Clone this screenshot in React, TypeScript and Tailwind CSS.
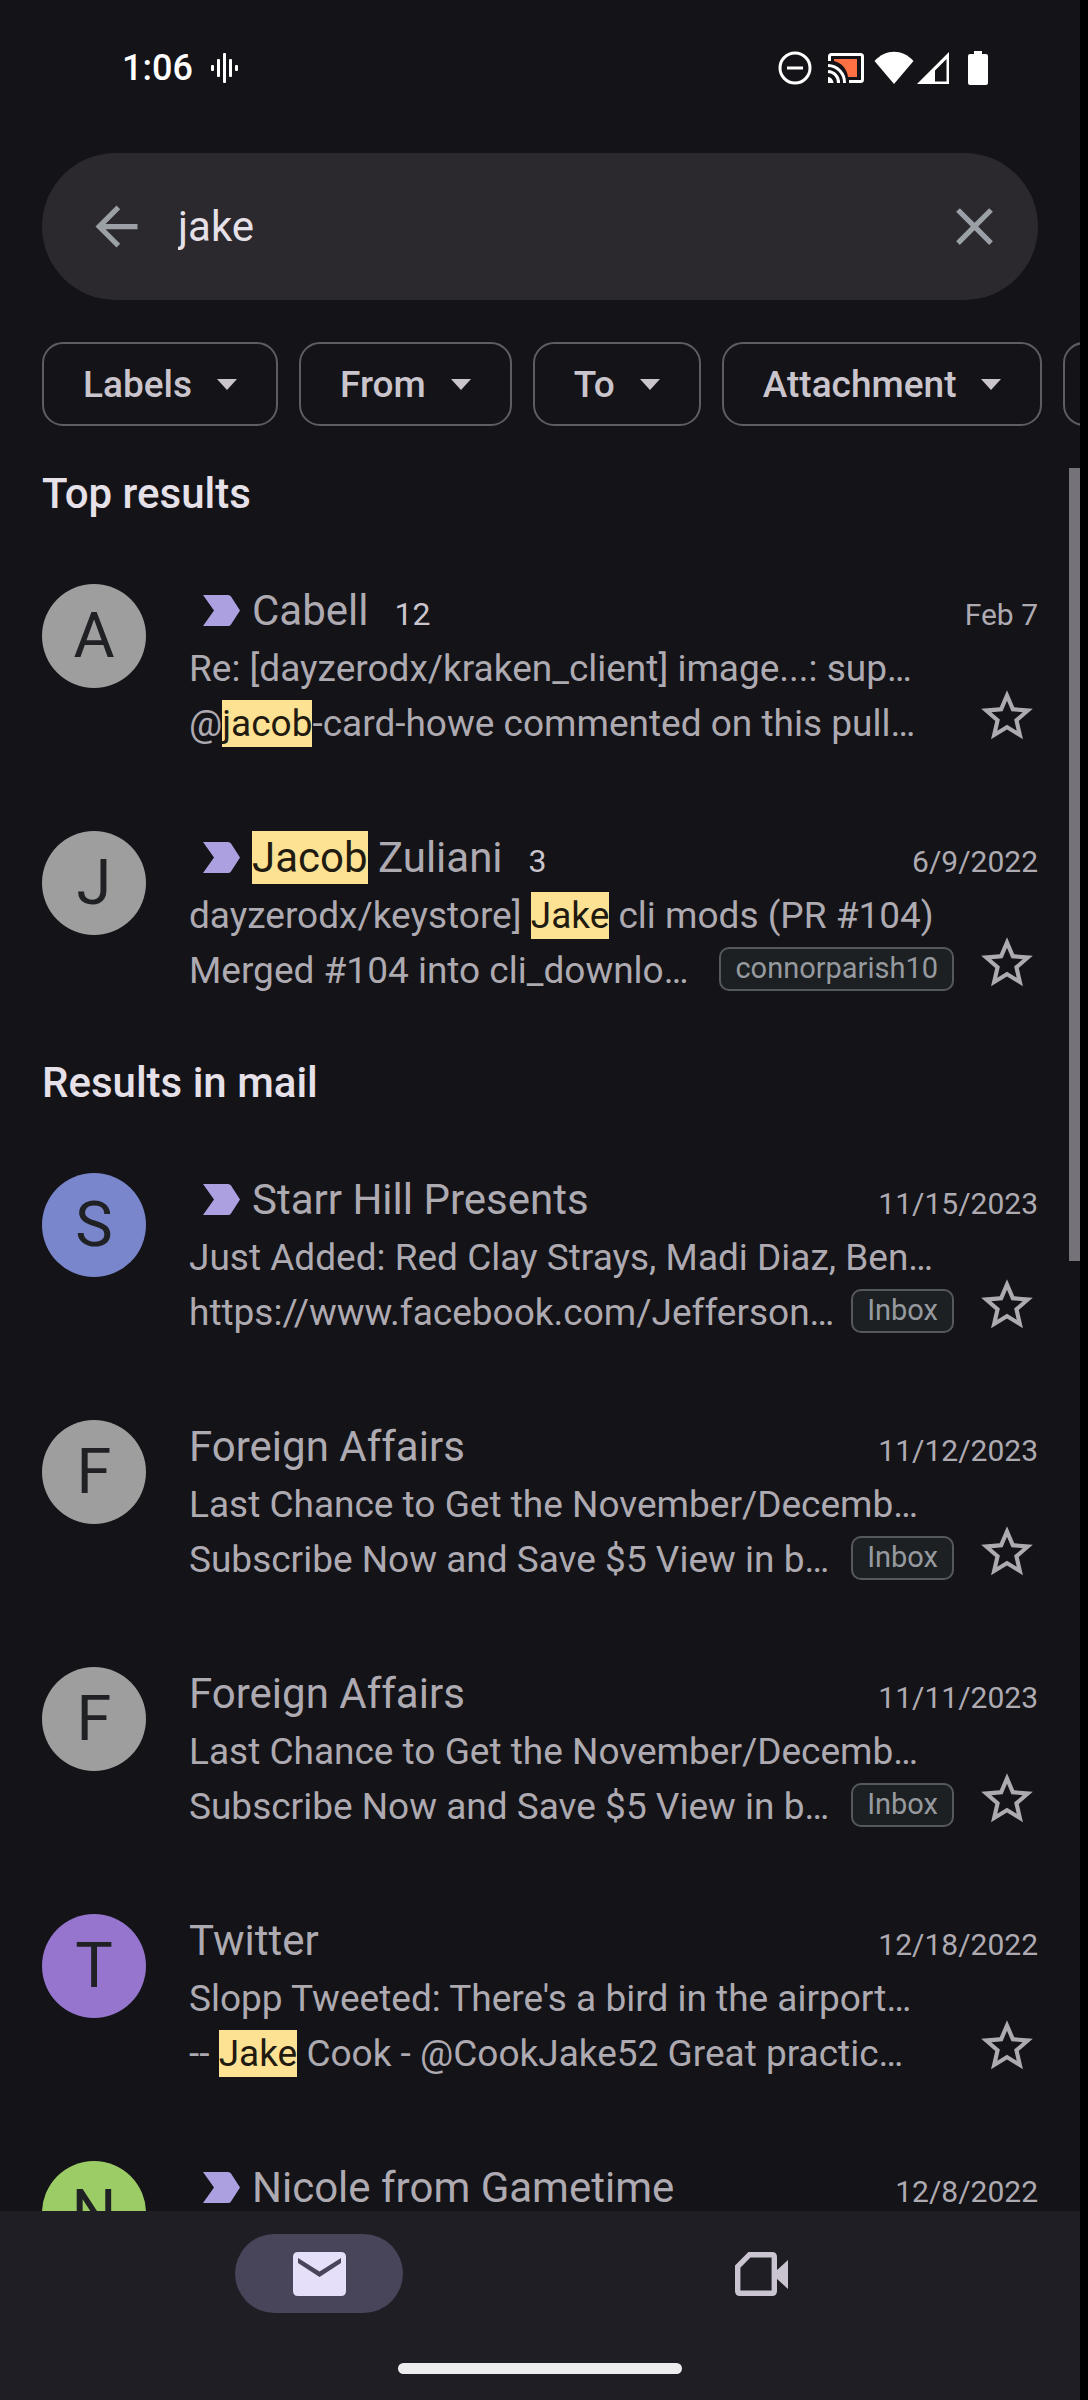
import { useState } from "react";
import type { ReactNode } from "react";

type Mail = {
  initial: string;
  avatar: string;
  important?: boolean;
  sender: ReactNode;
  count?: number;
  date: string;
  subject?: ReactNode;
  snippet?: ReactNode;
  label?: string;
};

function Hit({ children }: { children: ReactNode }) {
  return <mark className="inline-block bg-[#fde293] text-[#1f1b10]">{children}</mark>;
}

const topResults: Mail[] = [
  {
    initial: "A",
    avatar: "bg-[#9e9e9e]",
    important: true,
    sender: "Cabell",
    count: 12,
    date: "Feb 7",
    subject: "Re: [dayzerodx/kraken_client] image...: sup…",
    snippet: <>@<Hit>jacob</Hit>-card-howe commented on this pull…</>,
  },
  {
    initial: "J",
    avatar: "bg-[#9e9e9e]",
    important: true,
    sender: <><Hit>Jacob</Hit> Zuliani</>,
    count: 3,
    date: "6/9/2022",
    subject: <>dayzerodx/keystore] <Hit>Jake</Hit> cli mods (PR #104)</>,
    snippet: "Merged #104 into cli_downlo…",
    label: "connorparish10",
  },
];

const mailResults: Mail[] = [
  {
    initial: "S",
    avatar: "bg-[#7986cb]",
    important: true,
    sender: "Starr Hill Presents",
    date: "11/15/2023",
    subject: "Just Added: Red Clay Strays, Madi Diaz, Ben…",
    snippet: "https://www.facebook.com/Jefferson…",
    label: "Inbox",
  },
  {
    initial: "F",
    avatar: "bg-[#9e9e9e]",
    sender: "Foreign Affairs",
    date: "11/12/2023",
    subject: "Last Chance to Get the November/Decemb…",
    snippet: "Subscribe Now and Save $5 View in b…",
    label: "Inbox",
  },
  {
    initial: "F",
    avatar: "bg-[#9e9e9e]",
    sender: "Foreign Affairs",
    date: "11/11/2023",
    subject: "Last Chance to Get the November/Decemb…",
    snippet: "Subscribe Now and Save $5 View in b…",
    label: "Inbox",
  },
  {
    initial: "T",
    avatar: "bg-[#9575cd]",
    sender: "Twitter",
    date: "12/18/2022",
    subject: "Slopp Tweeted: There's a bird in the airport…",
    snippet: <>-- <Hit>Jake</Hit> Cook - @CookJake52 Great practic…</>,
  },
  {
    initial: "N",
    avatar: "bg-[#9ccc65]",
    important: true,
    sender: "Nicole from Gametime",
    date: "12/8/2022",
  },
];

function StatusBar() {
  return (
    <div className="flex h-[135px] shrink-0 items-center justify-between pr-[92px] pl-[122px] text-white">
      <div className="flex items-center gap-[18px]">
        <span className="text-[36px] leading-[42px] font-medium">1:06</span>
        <svg viewBox="0 0 28 32" className="h-8 w-7" fill="currentColor" aria-hidden="true">
          <rect x="0" y="13" width="3" height="6" rx="1" />
          <rect x="6" y="7" width="3" height="18" rx="1" />
          <rect x="12" y="1" width="3" height="30" rx="1" />
          <rect x="18" y="7" width="3" height="18" rx="1" />
          <rect x="24" y="13" width="3" height="6" rx="1" />
        </svg>
      </div>
      <div className="flex items-center">
        <svg viewBox="0 0 34 34" className="h-[34px] w-[34px]" fill="none" stroke="currentColor" strokeWidth="3" aria-hidden="true">
          <circle cx="17" cy="17" r="15" />
          <path d="M9 17h16" />
        </svg>
        <svg viewBox="0 0 38 32" className="ml-[15px] h-8 w-[38px]" aria-hidden="true">
          <path d="M7 7H30V25H21C20 17 15 11 7 9Z" fill="#ff7043" />
          <g fill="none" stroke="currentColor" strokeWidth="3">
            <path d="M2.5 9V4.500Q2.500 2.500 4.500 2.500H33.500Q35.500 2.500 35.500 4.500V27.500Q35.500 29.500 33.500 29.500H22" />
            <path d="M1 13.500A17 17 0 0 1 17.500 31" />
            <path d="M1 19.500A11 11 0 0 1 11.500 31" />
          </g>
          <path d="M1 25A6 6 0 0 1 6.500 31H1Z" fill="currentColor" />
        </svg>
        <svg viewBox="0 0 40 34" className="ml-[9px] h-[34px] w-10" fill="currentColor" aria-hidden="true">
          <path d="M0.500 10C12 -2.300 28 -2.300 39.500 10L20 33Z" />
        </svg>
        <svg viewBox="0 0 34 34" className="ml-[2px] h-[34px] w-[34px]" fill="currentColor" aria-hidden="true">
          <path fillRule="evenodd" d="M33 1V33H1ZM30.500 8L19 19.500V30.500H30.500Z" />
        </svg>
        <svg viewBox="0 0 20 34" className="ml-[18px] h-[34px] w-5" fill="currentColor" aria-hidden="true">
          <path d="M6 0h8v3h4a2 2 0 0 1 2 2v27a2 2 0 0 1-2 2H2a2 2 0 0 1-2-2V5a2 2 0 0 1 2-2h4z" />
        </svg>
      </div>
    </div>
  );
}

function SearchBar() {
  const [query, setQuery] = useState("jake");
  return (
    <form
      role="search"
      onSubmit={(e) => e.preventDefault()}
      className="mx-[42px] mt-[18px] flex h-[147px] shrink-0 items-center rounded-full bg-[#2b282e] pr-8 pl-[43px] text-[#9aa0a6]"
    >
      <button type="button" aria-label="Back" className="shrink-0">
        <svg viewBox="0 0 24 24" className="h-[63px] w-[63px]" fill="currentColor">
          <path d="M20 11H7.830l5.590-5.590L12 4l-8 8 8 8 1.410-1.410L7.830 13H20v-2z" />
        </svg>
      </button>
      <input
        type="text"
        aria-label="Search in mail"
        value={query}
        onChange={(e) => setQuery(e.target.value)}
        className="ml-[30px] min-w-0 flex-1 bg-transparent text-[42px] leading-[53px] text-[#e6e1e9] outline-none"
      />
      <button type="button" aria-label="Clear" onClick={() => setQuery("")} className="shrink-0">
        <svg viewBox="0 0 24 24" className="h-[63px] w-[63px]" fill="currentColor">
          <path d="M19 6.410L17.590 5 12 10.590 6.410 5 5 6.410 10.590 12 5 17.590 6.410 19 12 13.410 17.590 19 19 17.590 13.410 12z" />
        </svg>
      </button>
    </form>
  );
}

function Filters() {
  return (
    <div className="mt-[42px] flex shrink-0 gap-[21px] overflow-hidden pl-[42px]">
      {["Labels", "From", "To", "Attachment"].map((name) => (
        <button
          key={name}
          type="button"
          className="flex h-[84px] shrink-0 items-center gap-[25px] rounded-[21px] border-2 border-[#5f5d64] px-[39px] text-[37px] leading-[47px] font-medium text-[#cac5cd]"
        >
          {name}
          <svg viewBox="0 0 20 11" className="h-[11px] w-5" fill="currentColor" aria-hidden="true">
            <path d="M0 0H20L10 11Z" />
          </svg>
        </button>
      ))}
      <button type="button" aria-label="More filters" className="h-[84px] w-[200px] shrink-0 rounded-[21px] border-2 border-[#5f5d64]" />
    </div>
  );
}

function Row({ mail }: { mail: Mail }) {
  return (
    <li className="flex gap-[43px] pt-10 pb-11 text-[#aeaab1]">
      <div className={`flex h-[104px] w-[104px] shrink-0 items-center justify-center rounded-full text-[63px] leading-[74px] text-[#202124] ${mail.avatar}`}>
        {mail.initial}
      </div>
      <div className="min-w-0 flex-1">
        <div className="flex items-baseline">
          {mail.important && (
            <svg viewBox="0 0 37 31" className="mr-3 ml-[14px] h-[31px] w-[37px] shrink-0 self-center" fill="#aca0e0" role="img" aria-label="Important">
              <path d="M0 0H25Q27 0 28 1.500L37 15.500L28 29.500Q27 31 25 31H0L11 15.500Z" />
            </svg>
          )}
          <h3 className="truncate text-[42px] leading-[53px]">{mail.sender}</h3>
          {mail.count && <span className="ml-[26px] text-[32px] leading-9 text-[#cac5cd]">{mail.count}</span>}
          <time className="ml-auto shrink-0 text-[30px] leading-9">{mail.date}</time>
        </div>
        {mail.subject && (
          <div className="mt-2 flex items-end justify-between gap-[22px]">
            <div className="min-w-0 flex-1 text-[37px] leading-[47px]">
              <p className="truncate">{mail.subject}</p>
              <div className="mt-2 flex items-start justify-between gap-2">
                <p className="min-w-0 truncate">{mail.snippet}</p>
                {mail.label && (
                  <span className="h-11 shrink-0 rounded-[10px] border-2 border-[#55585c] bg-[#1d2023] px-[14px] text-[29px] leading-[38px] text-[#969a9f]">
                    {mail.label}
                  </span>
                )}
              </div>
            </div>
            <button type="button" aria-label="Star" className="shrink-0">
              <svg viewBox="0 0 24 24" className="h-[62px] w-[62px]" fill="currentColor">
                <path d="M22 9.240l-7.190-.620L12 2 9.190 8.630 2 9.240l5.460 4.730L5.820 21 12 17.270 18.180 21l-1.630-7.030L22 9.240zM12 15.400l-3.760 2.270 1-4.280-3.320-2.880 4.380-.380L12 6.100l1.710 4.040 4.380.380-3.320 2.880 1 4.280L12 15.400z" />
              </svg>
            </button>
          </div>
        )}
      </div>
    </li>
  );
}

function Section({ title, mails }: { title: string; mails: Mail[] }) {
  return (
    <section>
      <h2 className="pb-[6px] text-[42px] leading-[89px] font-medium text-[#e6e1e9]">{title}</h2>
      <ul>
        {mails.map((mail) => (
          <Row key={mail.date} mail={mail} />
        ))}
      </ul>
    </section>
  );
}

function BottomNav() {
  return (
    <div className="shrink-0 bg-[#1f1e24] pt-[23px] pb-[26px]">
      <nav className="flex justify-around px-[98px]">
        <button type="button" aria-label="Mail" aria-current="page" className="flex h-[79px] w-[168px] items-center justify-center rounded-full bg-[#484459] text-[#e5dff9]">
          <svg viewBox="0 0 53 44" className="h-11 w-[53px]" aria-hidden="true">
            <path fillRule="evenodd" fill="currentColor" d="M5 0H48Q53 0 53 5V39Q53 44 48 44H5Q0 44 0 39V5Q0 0 5 0ZM5 6V11L26.500 25L48 11V6L26.500 19.500Z" />
          </svg>
        </button>
        <button type="button" aria-label="Meet" className="flex h-[79px] w-[168px] items-center justify-center rounded-full text-[#cac5d0]">
          <svg viewBox="0 0 53 44" className="h-11 w-[53px]" aria-hidden="true">
            <path d="M14.500 2.700H37Q39.300 2.700 39.300 5V39Q39.300 41.300 37 41.300H5Q2.700 41.300 2.700 39V14.500Z" fill="none" stroke="currentColor" strokeWidth="5.400" />
            <path d="M41 19L53 8V37L41 26Z" fill="currentColor" />
          </svg>
        </button>
      </nav>
      <div className="mx-auto mt-[50px] h-[11px] w-[284px] rounded-full bg-[#ededed]" />
    </div>
  );
}

export default function App() {
  return (
    <div className="h-screen bg-black pr-2 font-['Roboto',sans-serif]">
      <div className="flex h-full flex-col overflow-hidden bg-[#141318]">
        <StatusBar />
        <SearchBar />
        <Filters />
        <main className="relative mt-[23px] min-h-0 flex-1">
          <div className="h-full overflow-y-auto px-[42px] [scrollbar-width:none]">
            <Section title="Top results" mails={topResults} />
            <Section title="Results in mail" mails={mailResults} />
          </div>
          <div className="absolute top-[19px] right-0 h-[45%] w-[11px] bg-[#757279]" />
        </main>
        <BottomNav />
      </div>
    </div>
  );
}
